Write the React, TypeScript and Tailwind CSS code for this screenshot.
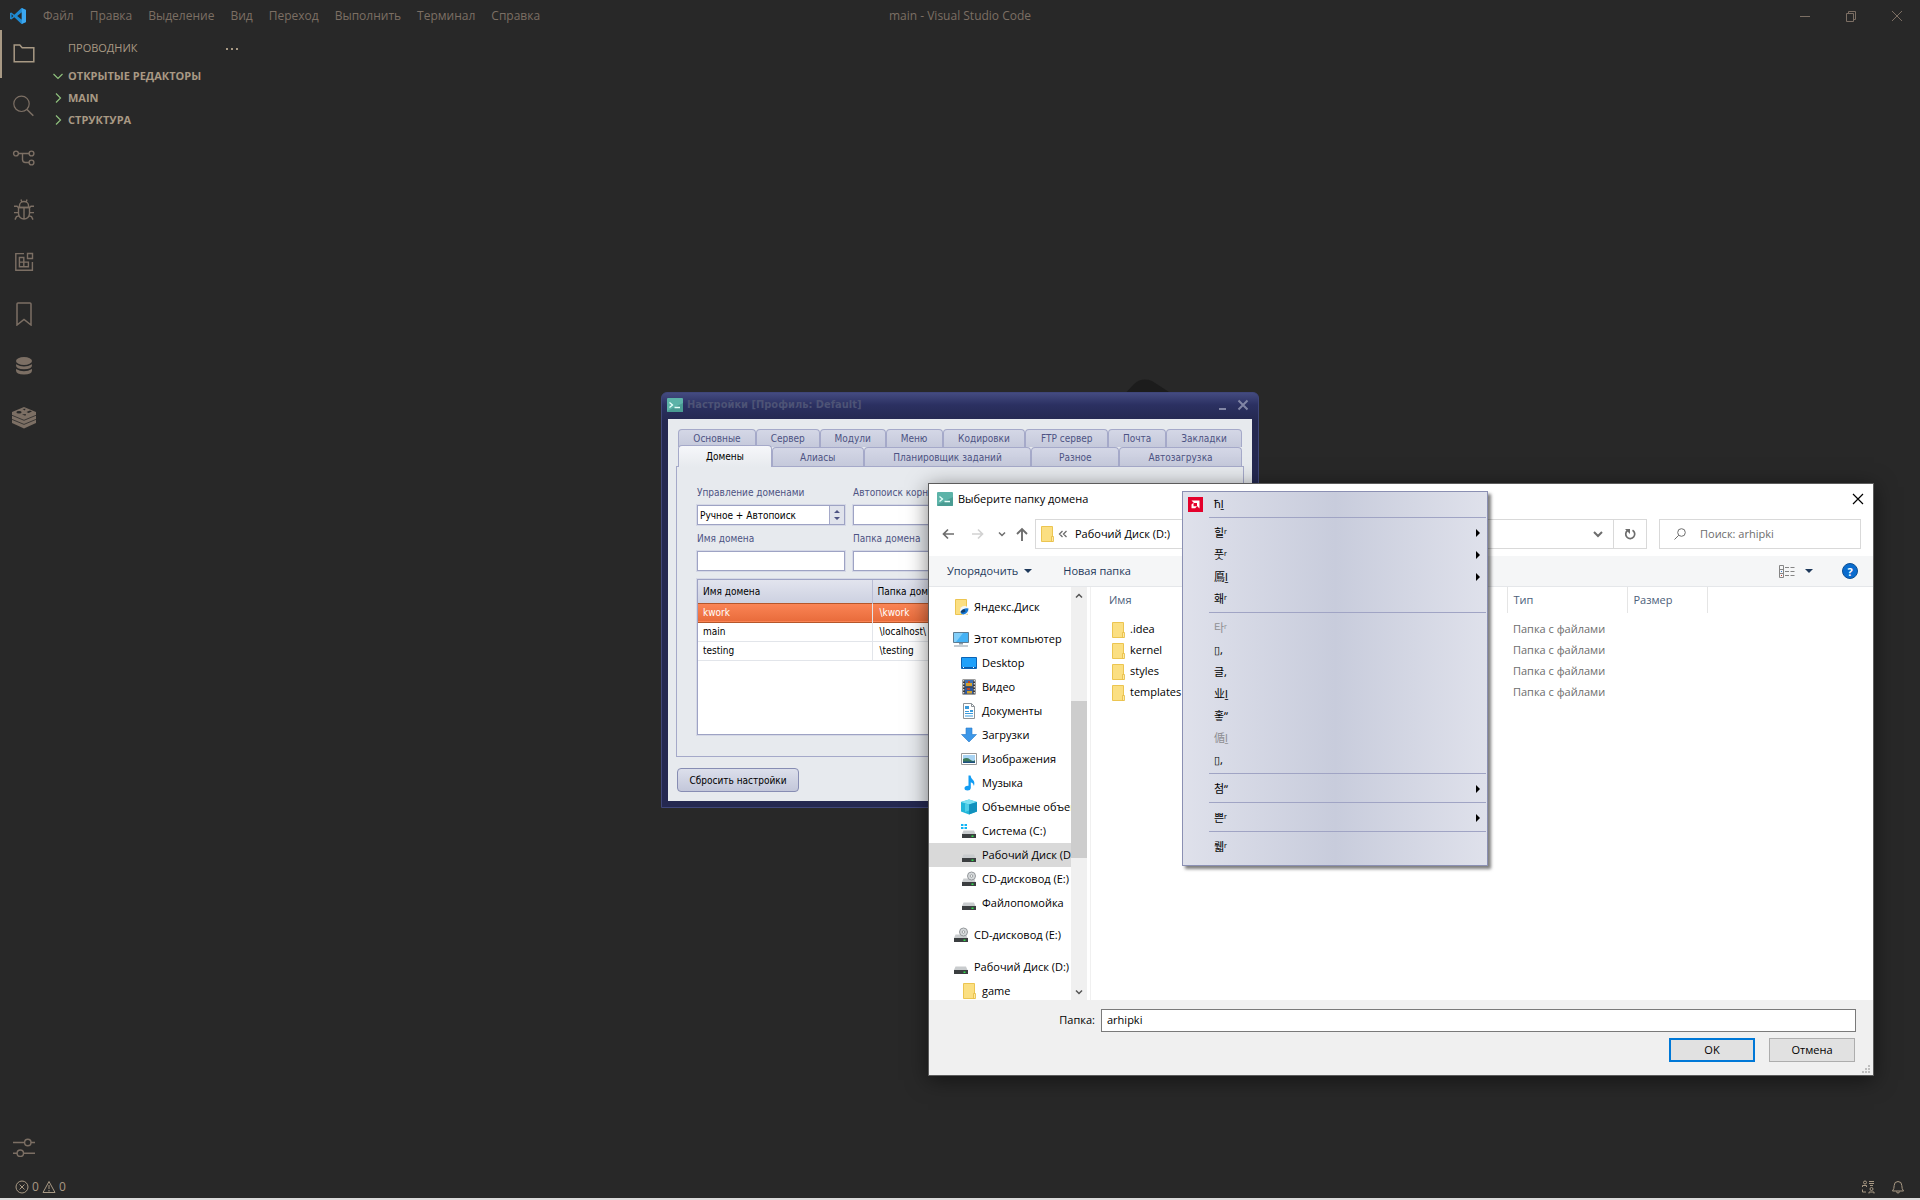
import React from "react";

type IconProps = { children: React.ReactNode; box?: string; className?: string };

function Line({ children, box = "0 0 24 24", className = "size-6" }: IconProps) {
  return (
    <svg viewBox={box} className={className} fill="none" stroke="currentColor" aria-hidden="true">
      {children}
    </svg>
  );
}

const activities = [
  {
    label: "Проводник",
    active: true,
    icon: (
      <Line>
        <path strokeWidth="1.5" d="M2.2 19.8V3h5.6l2.4 2.8h11.6v14z" />
      </Line>
    ),
  },
  {
    label: "Поиск",
    icon: (
      <Line>
        <circle strokeWidth="1.2" cx="9.5" cy="9.8" r="7.7" />
        <path strokeWidth="1.6" d="M15 15.5l6.3 6.3" />
      </Line>
    ),
  },
  {
    label: "Система управления версиями",
    icon: (
      <Line>
        <g strokeWidth="1.4">
          <circle cx="4" cy="7.5" r="2.4" />
          <circle cx="19.500" cy="7.500" r="2.400" />
          <circle cx="19.500" cy="16.500" r="2.400" />
          <path d="M6.400 7.500h10.700M10.500 7.500v6q0 3 3 3h3.600" />
        </g>
      </Line>
    ),
  },
  {
    label: "Запуск и отладка",
    icon: (
      <Line>
        <g strokeWidth="1.4">
          <path d="M6.5 9.5h11v6a5.500 5.500 0 0 1-11 0zM7.500 9V7.500a4.500 4 0 0 1 9 0V9M12 9.500V21" />
          <path d="M9.800 4L9 1.500M14.200 4l.8-2.500M2 8.200h3l1.500 1.300h11L19 8.200h3M2 14.600h4.500M22 14.600h-4.500M3 21.600l1.500-3 2.500-.8M21 21.600l-1.500-3-2.500-.8" />
        </g>
      </Line>
    ),
  },
  {
    label: "Расширения",
    icon: (
      <Line>
        <g strokeWidth="1.400">
          <path d="M12 3.600H3.800v16.600h16.600V12" />
          <path d="M15.500 3.500h5v5h-5zM7.400 7.500h4.400v4.600H7.400zM7.400 12.100h4.400v4.600H7.400zM11.800 12.100h4.600v4.600h-4.600z" />
        </g>
      </Line>
    ),
  },
  {
    label: "Закладки",
    icon: (
      <Line>
        <path strokeWidth="1.500" d="M5 23V2q0-1 1-1h12q1 0 1 1v21l-7-5.500z" />
      </Line>
    ),
  },
  {
    label: "Базы данных",
    icon: (
      <svg viewBox="0 0 24 24" className="size-6" fill="currentColor" aria-hidden="true">
        <ellipse cx="12" cy="7" rx="8" ry="4" />
        <path d="M4 10.200q8 4.600 16 0v1q0 4-8 4t-8-4zM4 15q8 4.600 16 0v1.600q0 4-8 4t-8-4z" />
      </svg>
    ),
  },
  {
    label: "Redis",
    icon: (
      <svg viewBox="0 0 24 24" className="size-6" fill="currentColor" aria-hidden="true">
        <path d="M12 1L24 6v11l-12 5.500L0 17V6z" />
        <g fill="none" stroke="#282828" strokeWidth=".8">
          <path d="M0 9.300l12 5 12-5M0 13.400l12 5 12-5" />
        </g>
        <g fill="#282828">
          <ellipse cx="7" cy="6.200" rx="2.600" ry="1.200" />
          <path d="M10.500 3l3-.2-.6 1.600zM14.500 6l3.500-1.400 2 .9-3.500 1.600zM10 8.500l4-.6-.6 1.900z" />
        </g>
      </svg>
    ),
  },
];

const sections = [
  { label: "ОТКРЫТЫЕ РЕДАКТОРЫ", open: true },
  { label: "MAIN", open: false },
  { label: "СТРУКТУРА", open: false },
];

function TitleBar() {
  const menus = ["Файл", "Правка", "Выделение", "Вид", "Переход", "Выполнить", "Терминал", "Справка"];
  return (
    <header className="grid h-[30px] grid-cols-[1fr_auto_1fr] items-center pt-px text-xs text-[#7c6f64]">
      <div className="flex h-full items-center">
        <svg viewBox="0 0 16 16" className="mr-[9px] ml-[10px] size-4" aria-hidden="true">
          <path d="M11.500 0L16 2v12l-4.500 2L4.300 9.300 1.300 11.600 0 11V5l1.300-.6 3 2.300z" fill="#1f8ad2" />
          <path d="M1.600 6.300L3.300 8 1.600 9.700zM11.800 4.300L7.200 8l4.600 3.700z" fill="#282828" />
          <path d="M11.800 0L16 2v12l-4.200 2z" fill="#3ba7f0" />
        </svg>
        <nav className="flex">
          {menus.map((m) => (
            <button key={m} className="px-2">
              {m}
            </button>
          ))}
        </nav>
      </div>
      <h1>main - Visual Studio Code</h1>
      <div className="flex h-full justify-end">
        <button aria-label="Свернуть" className="grid w-[46px] place-items-center">
          <Line box="0 0 12 12" className="size-3"><path d="M1 6.500h10" /></Line>
        </button>
        <button aria-label="Восстановить" className="grid w-[46px] place-items-center">
          <Line box="0 0 12 12" className="size-3"><path d="M1.500 3.500h7v8h-7zM3.500 3.500v-2h7v8h-2" /></Line>
        </button>
        <button aria-label="Закрыть" className="grid w-[46px] place-items-center">
          <Line box="0 0 12 12" className="size-3"><path d="M1 1l10 10M11 1L1 11" /></Line>
        </button>
      </div>
    </header>
  );
}

function ActivityBar() {
  return (
    <nav className="flex w-12 flex-col gap-1 pb-1 text-[#7c6f64]">
      {activities.map((a) => (
        <button
          key={a.label}
          aria-label={a.label}
          className={
            a.active
              ? "grid h-12 place-items-center border-l-2 border-[#a89984] pr-0.5 text-[#a89984]"
              : "grid h-12 place-items-center"
          }
        >
          {a.icon}
        </button>
      ))}
      <button aria-label="Управление" className="mt-auto grid h-12 place-items-center">
        <Line>
          <g strokeWidth="1.400">
            <circle cx="15.800" cy="6.500" r="3.200" />
            <circle cx="8.300" cy="17.200" r="3.200" />
            <path d="M1 6.500h11.600M19 6.500h4M1 17.200h4.100M11.500 17.200H23" />
          </g>
        </Line>
      </button>
    </nav>
  );
}

function Sidebar() {
  return (
    <aside className="w-[200px] text-[11px] text-[#a89984]">
      <div className="flex h-[35px] items-center justify-between pt-0.5 pr-1.5 pl-5">
        <h2>ПРОВОДНИК</h2>
        <button aria-label="Дополнительные действия" className="pr-[3px]">
          <Line box="0 0 14 4" className="h-1 w-3.5"><path strokeWidth="2" strokeDasharray="2 3" d="M1 2h12" /></Line>
        </button>
      </div>
      {sections.map((s) => (
        <button key={s.label} className="flex h-[22px] w-full items-center gap-[5px] pl-[5px] font-bold">
          <Line box="0 0 10 10" className="size-2.5 text-[#8ec07c]">
            <path strokeWidth="1.200" d={s.open ? "M.5 3L5 7.500 9.500 3" : "M3 .5L7.500 5 3 9.500"} />
          </Line>
          {s.label}
        </button>
      ))}
    </aside>
  );
}

function StatusBar() {
  return (
    <footer className="flex h-[22px] items-center justify-between px-[15px] text-xs text-[#a89984]">
      <button className="flex items-center gap-[3px]">
        <Line box="0 0 14 14" className="size-3.5">
          <circle cx="7" cy="7" r="6" />
          <path d="M4.500 4.500l5 5M9.500 4.500l-5 5" />
        </Line>
        0
        <Line box="0 0 14 14" className="size-3.5">
          <path d="M7 1.500L13 12.500H1zM7 5v4M7 10v1.500" />
        </Line>
        0
      </button>
      <div className="flex gap-4">
        <button aria-label="Отзывы">
          <Line box="0 0 14 14" className="size-3.5">
            <circle cx="4" cy="2.500" r="1.500" />
            <path d="M1.500 7V5.500h4V7M8 1.500h5M8 3.500h5M9 5.500h3M1.500 9.500v2.500H5" />
            <circle cx="10.500" cy="9" r="1.500" />
            <path d="M8 13.500V12h5v1.500" />
          </Line>
        </button>
        <button aria-label="Уведомления">
          <Line box="0 0 14 14" className="size-3.5">
            <path d="M7 1.500q3.800 0 3.800 4 0 3.500 1.700 5.500h-11q1.700-2 1.700-5.500 0-4 3.800-4zM5.500 11.500a1.500 1.500 0 0 0 3 0" />
          </Line>
        </button>
      </div>
    </footer>
  );
}

function ConsoleIcon() {
  return (
    <svg viewBox="0 0 16 14" className="h-3.5 w-4 shrink-0" aria-hidden="true">
      <rect width="16" height="14" rx="1" fill="#5cb3a8" />
      <path d="M0 13L16 5v8q0 1-1 1H1z" fill="#4a9c93" />
      <path d="M2.500 4.500L5.500 7l-3 2.500M7.500 9.500H13" fill="none" stroke="#e6fffa" strokeWidth="1.300" />
    </svg>
  );
}

const tabsTop = ["Основные", "Сервер", "Модули", "Меню", "Кодировки", "FTP сервер", "Почта", "Закладки"];
const tabsBottom = ["Домены", "Алиасы", "Планировщик заданий", "Разное", "Автозагрузка"];
const domains = [
  ["kwork", "\\kwork"],
  ["main", "\\localhost\\"],
  ["testing", "\\testing"],
];

const inputStyle = "h-5 w-full border border-[#9ea3c4] bg-white outline outline-[#d5d8e6]";

function SettingsWindow() {
  return (
    <section
      aria-label="Настройки"
      className="absolute top-[392px] left-[661px] flex h-[416px] w-[598px] flex-col rounded-t-md border border-[#3f4679] bg-[#262b55] bg-linear-to-b from-[#444b80] from-0% via-[#2b3061] via-[12px] to-[#242850] to-[28px] pr-1.5 pb-1.5 pl-[5px] font-['DejaVu_Sans_Condensed','DejaVu_Sans',sans-serif] text-[10px] text-[#4d5383]"
    >
      <header className="flex h-[26px] items-center gap-1 pr-[3px] pb-0.5 text-[#4d5376]">
        <ConsoleIcon />
        <h2 className="text-[11px] font-bold">Настройки [Профиль: Default]</h2>
        <div className="ml-auto flex items-center gap-2.5 text-[#8185a5]">
          <button aria-label="Свернуть">
            <Line box="0 0 8 12" className="h-3 w-2"><path strokeWidth="2" d="M0 10h7" /></Line>
          </button>
          <button aria-label="Закрыть">
            <Line box="0 0 12 12" className="size-3"><path strokeWidth="2" d="M1.500 1.500l9 9M10.500 1.500l-9 9" /></Line>
          </button>
        </div>
      </header>
      <div className="ml-px flex flex-1 flex-col bg-[#e7eaee] px-2 pt-2.5 pb-[9px]">
        <div role="tablist" className="px-0.5">
          <div className="grid grid-cols-[78fr_64fr_66fr_57fr_83fr_83fr_58fr_76fr]">
            {tabsTop.map((t) => (
              <button key={t} role="tab" className="h-[18px] rounded-t border border-b-0 border-[#a5a9c9] bg-linear-to-b from-[#d4d7e6] to-[#c5c9db]">
                {t}
              </button>
            ))}
          </div>
          <div className="grid h-[19px] grid-cols-[94fr_92fr_168fr_88fr_123fr] grid-rows-[19px] items-end">
            {tabsBottom.map((t, i) =>
              i === 0 ? (
                <button key={t} role="tab" aria-selected="true" className="relative z-10 -mb-px h-[22px] rounded-t border border-b-0 border-[#a5a9c9] bg-linear-to-b from-[#f6f7fa] to-[#e7eaee] text-black">
                  {t}
                </button>
              ) : (
                <button key={t} role="tab" className="h-[19px] rounded-t border border-b-0 border-[#a5a9c9] bg-linear-to-b from-[#d4d7e6] to-[#c5c9db]">
                  {t}
                </button>
              ),
            )}
          </div>
        </div>
        <div className="flex flex-1 flex-col border border-[#a5a9c9] px-5 pt-[19px] pb-[21px]">
          <div className="grid grid-cols-[148px_1fr] gap-x-2">
            <label htmlFor="mode" className="leading-[14px]">Управление доменами</label>
            <label htmlFor="auto" className="leading-[14px] whitespace-nowrap">Автопоиск корня</label>
            <div className="relative mt-[5px]">
              <select id="mode" defaultValue="1" className={`${inputStyle} appearance-none pl-0.5 text-black`}>
                <option value="1">Ручное + Автопоиск</option>
              </select>
              <span className="pointer-events-none absolute inset-y-px right-px grid w-[15px] place-items-center border-l border-[#a5a9c9] bg-[#e0e3ec] text-[#4d5383]">
                <svg viewBox="0 0 8 12" className="h-3 w-2" fill="currentColor" aria-hidden="true">
                  <path d="M4 1l3 3H1zM4 11l3-3H1z" />
                </svg>
              </span>
            </div>
            <input id="auto" className={`${inputStyle} mt-[5px]`} />
            <label htmlFor="name" className="mt-[7px] leading-[14px]">Имя домена</label>
            <label htmlFor="dir" className="mt-[7px] leading-[14px]">Папка домена</label>
            <input id="name" className={`${inputStyle} mt-[5px]`} />
            <input id="dir" className={`${inputStyle} mt-[5px]`} />
          </div>
          <div className="mt-2 flex-1 border border-[#9ea3c4] bg-white outline outline-[#d5d8e6]">
            <table className="w-full table-fixed text-left text-black">
              <colgroup>
                <col className="w-[174px]" />
                <col />
              </colgroup>
              <thead>
                <tr className="h-[23px] bg-linear-to-b from-[#e2e4ee] to-[#cdd1e1]">
                  <th className="border-r border-[#b9bdd4] pl-[5px] font-normal">Имя домена</th>
                  <th className="pl-[5px] font-normal">Папка домена</th>
                </tr>
              </thead>
              <tbody>
                {domains.map(([name, dir], i) => (
                  <tr
                    key={name}
                    className={
                      i === 0
                        ? "h-[19px] border-y border-[#b5562a] bg-linear-to-b from-[#fa8455] to-[#e96c3c] text-white"
                        : "h-[19px] border-b border-[#e2e5ea]"
                    }
                  >
                    <td className="border-r border-[#e2e5ea] pl-[5px]">{name}</td>
                    <td className="pl-[7px]">{dir}</td>
                  </tr>
                ))}
              </tbody>
            </table>
          </div>
        </div>
        <button className="mt-[11px] ml-px h-6 w-[122px] self-start rounded border border-[#878db3] bg-linear-to-b from-[#dcdfeb] to-[#c3c7da] text-black">
          Сбросить настройки
        </button>
      </div>
    </section>
  );
}

type Kind =
  | "folder" | "yandex" | "pc" | "desktop" | "video" | "docs" | "down"
  | "image" | "music" | "cube" | "system" | "drive" | "cd";

function Drive() {
  return (
    <>
      <path d="M2.500 7.500h10.500l1.500 3.500H1z" fill="#c9ccce" />
      <path d="M1 11h14v4H1z" fill="#3b3e40" />
      <path d="M10.500 12.500h2v1.500h-2z" fill="#2fe04a" />
    </>
  );
}

function FileIcon({ kind }: { kind: Kind }) {
  return (
    <svg viewBox="0 0 16 16" className="size-4 shrink-0" aria-hidden="true">
      {(kind === "folder" || kind === "yandex") && (
        <>
          <path d="M2.500.5h11v15h-11z" fill="#fbdf82" stroke="#ecc551" />
          <path d="M12.500 10.500h2v5h-2z" fill="#ffe9a2" stroke="#e6bb40" strokeWidth=".8" />
        </>
      )}
      {kind === "yandex" && (
        <>
          <circle cx="11.500" cy="11.500" r="4.500" fill="#f3f6fa" />
          <path d="M7.500 13q3-4.500 8-3.500-.5 5-5 6-2.500 0-3-2.500z" fill="#1377d4" />
          <path d="M7.500 13q1.500-3 4-3l1 2.500q-2.500 2-5 .5z" fill="#123e6b" />
        </>
      )}
      {kind === "pc" && (
        <>
          <path d="M.5 1.500h15v10H.5z" fill="#45b2f5" stroke="#5d7c92" />
          <path d="M1 2h9L3 11H1z" fill="#82cffa" />
          <path d="M6 12h4v1.500H6zM1 14.500h14v1H1z" fill="#8b9aa6" />
        </>
      )}
      {kind === "desktop" && (
        <>
          <path d="M.5 2.500h15v11H.5z" fill="#1ea0fa" stroke="#0b63b5" />
          <path d="M1 12h14v1H1z" fill="#0b5aa8" />
          <path d="M2 12h1v1H2zM12 12h1v1h-1z" fill="#fff" />
        </>
      )}
      {kind === "video" && (
        <>
          <path d="M1.500.5h13v15h-13z" fill="#3a3a3a" />
          <path d="M4 1h8v6.500H4z" fill="#3f6fb0" />
          <path d="M4 8.500h8V15H4z" fill="#2e589c" />
          <path d="M5 4h6v3H5zM6 12h5v2.500H6z" fill="#d4a02c" />
          <path d="M7 2h2v2H7zM6 9h3v2H6z" fill="#b8442a" />
          <path d="M2.700 1v15M13.300 1v15" stroke="#e8e8e8" strokeWidth="1.200" strokeDasharray="1.500 1.500" />
        </>
      )}
      {kind === "docs" && (
        <>
          <path d="M2.500.5h8l3 3v12h-11z" fill="#fff" stroke="#8d9499" />
          <path d="M10.500.5v3h3" fill="none" stroke="#8d9499" />
          <path d="M4 3h4v3H4zM4 8h4v1H4zM4 10h8v1H4zM9 7h3v2H9zM4 12.500h8v1H4z" fill="#3a9bdc" />
        </>
      )}
      {kind === "down" && <path d="M5 1h6v6.500h4.500L8 15 .5 7.500H5z" fill="#3c97e8" stroke="#2679c9" strokeWidth=".6" />}
      {kind === "image" && (
        <>
          <path d="M.5 2.500h15v11H.5z" fill="#fff" stroke="#999" />
          <path d="M2 4h12v8H2z" fill="#a9d4f3" />
          <path d="M2 8q4-2 7 .5t5 .5v3H2z" fill="#3d7b5c" />
          <path d="M2 10.500h12V12H2z" fill="#1d4f80" />
        </>
      )}
      {kind === "music" && (
        <path d="M7.500.5h2q.5 3 2.500 4.500t1 6q-.5-3-3.200-3.800v5.800q-.3 2.500-3.300 2.500-3 0-3-2.200 0-2.800 4-2.600z" fill="#119cf3" />
      )}
      {kind === "cube" && (
        <>
          <path d="M0 3l8-2.500L16 3v9.500l-8 3-8-3z" fill="#21b6d9" />
          <path d="M0 3l8-2.500L16 3 8 5.500z" fill="#7be1f2" />
          <path d="M8 5.500L16 3v9.500l-8 3z" fill="#1191bd" />
          <path d="M4 4.500l4 1v6l-4 1.500z" fill="#4fcfe8" />
        </>
      )}
      {(kind === "drive" || kind === "system" || kind === "cd") && <Drive />}
      {kind === "system" && (
        <path d="M0 1h2.500v2H0zM3.500 1H6v2H3.500zM0 4h2.500v2H0zM3.500 4H6v2H3.500z" fill="#12b5f5" />
      )}
      {kind === "cd" && (
        <>
          <circle cx="10.500" cy="5" r="4" fill="#d6d9db" stroke="#95999c" />
          <circle cx="10.500" cy="5" r="1.300" fill="#fff" stroke="#8c9092" strokeWidth=".8" />
        </>
      )}
    </svg>
  );
}

const tree: { label: string; kind: Kind; child?: boolean; selected?: boolean }[] = [
  { label: "Яндекс.Диск", kind: "yandex" },
  { label: "Этот компьютер", kind: "pc" },
  { label: "Desktop", kind: "desktop", child: true },
  { label: "Видео", kind: "video", child: true },
  { label: "Документы", kind: "docs", child: true },
  { label: "Загрузки", kind: "down", child: true },
  { label: "Изображения", kind: "image", child: true },
  { label: "Музыка", kind: "music", child: true },
  { label: "Объемные объекты", kind: "cube", child: true },
  { label: "Система (C:)", kind: "system", child: true },
  { label: "Рабочий Диск (D:)", kind: "drive", child: true, selected: true },
  { label: "CD-дисковод (E:)", kind: "cd", child: true },
  { label: "Файлопомойка", kind: "drive", child: true },
  { label: "CD-дисковод (E:)", kind: "cd" },
  { label: "Рабочий Диск (D:)", kind: "drive" },
  { label: "game", kind: "folder", child: true },
];

function Chevron({ up = false, className = "h-2 w-2.5" }: { up?: boolean; className?: string }) {
  return (
    <Line box="0 0 10 8" className={className}>
      <path strokeWidth="2" d={up ? "M1 6l4-4 4 4" : "M1 2l4 4 4-4"} />
    </Line>
  );
}

function Caret() {
  return (
    <svg viewBox="0 0 8 4" className="h-1 w-2" fill="#1e395b" aria-hidden="true">
      <path d="M0 0h8L4 4z" />
    </svg>
  );
}

function FolderDialog() {
  return (
    <section
      aria-label="Выберите папку домена"
      className="absolute top-[483px] left-[928px] flex h-[593px] w-[946px] flex-col border border-[#5c5c5c] bg-white text-[11px] text-black shadow-[0_4px_20px_rgba(0,0,0,0.5)]"
    >
      <header className="flex h-[30px] items-center gap-[5px] pr-[9px] pl-2">
        <ConsoleIcon />
        <h2>Выберите папку домена</h2>
        <button aria-label="Закрыть" className="ml-auto">
          <Line box="0 0 12 12" className="size-3"><path strokeWidth="1.200" d="M1 1l10 10M11 1L1 11" /></Line>
        </button>
      </header>
      <div className="flex h-[42px] items-center pr-3 pb-0.5 pl-[13px] text-[#6d6d6d]">
        <button aria-label="Назад">
          <Line box="0 0 12 12" className="size-3"><path strokeWidth="1.700" d="M12 6H1.500M6 1.500L1.500 6 6 10.500" /></Line>
        </button>
        <button aria-label="Вперед" className="ml-[18px] text-[#d2d2d2]">
          <Line box="0 0 12 12" className="size-3"><path strokeWidth="1.700" d="M0 6h10.500M6 1.500L10.500 6 6 10.500" /></Line>
        </button>
        <button aria-label="Последние расположения" className="ml-3.5"><Chevron className="h-1.5 w-2" /></button>
        <button aria-label="Вверх" className="ml-[10px]">
          <Line box="0 0 12 14" className="h-3.5 w-3"><path strokeWidth="1.900" d="M6 14V2M1 7l5-5 5 5" /></Line>
        </button>
        <div className="ml-[7px] flex h-[30px] flex-1 items-center border border-[#d9d9d9] pl-[3px]">
          <FileIcon kind="folder" />
          <span className="ml-[3px]">
            <Line box="0 0 10 8" className="h-2 w-2.5"><path strokeWidth="1.300" d="M4.500 1l-3 3 3 3M8.500 1l-3 3 3 3" /></Line>
          </span>
          <span className="ml-[7px] text-black">Рабочий Диск (D:)</span>
          <button aria-label="Предыдущие расположения" className="mr-2.5 ml-auto"><Chevron className="h-2 w-2.5" /></button>
          <button aria-label="Обновить" className="grid h-full w-[33px] place-items-center border-l border-[#d9d9d9]">
            <Line box="0 0 12 12" className="size-3">
              <path strokeWidth="1.700" d="M8.500 2.200A4.500 4.500 0 1 1 3.500 2.500" />
              <path fill="currentColor" stroke="none" d="M1 1h5v5z" />
            </Line>
          </button>
        </div>
        <label className="ml-3 flex h-[30px] w-[202px] items-center gap-3.5 border border-[#d9d9d9] pl-3.5">
          <Line box="0 0 12 12" className="size-3 shrink-0">
            <circle cx="7.500" cy="4.500" r="3.800" />
            <path d="M4.700 7.300L.5 11.500" />
          </Line>
          <input aria-label="Поиск" placeholder="Поиск: arhipki" className="w-full outline-none placeholder:text-[#6d6d6d]" />
        </label>
      </div>
      <div className="flex h-[31px] items-center border-b border-[#e5e7ea] bg-[#f5f6f7] pr-[15px] pl-[18px] text-[#1e395b]">
        <button className="flex items-center gap-1.5">Упорядочить <Caret /></button>
        <button className="ml-[31px]">Новая папка</button>
        <button aria-label="Изменить представление" className="ml-auto flex items-center gap-[10px]">
          <Line box="0 0 16 13" className="h-[13px] w-4 text-[#858585]">
            <path d="M.5.5h4v12h-4zM.5 4.500h4M.5 8.500h4M6 2.500h4M11.500 2.500h4M6 6.500h4M11.500 6.500h4M6 10.500h4M11.500 10.500h4" />
            <path stroke="#c0392b" d="M2 10.500h1" />
            <path stroke="#3b78c4" d="M2 6.500h1" />
          </Line>
          <Caret />
        </button>
        <button aria-label="Справка" className="ml-[29px] grid size-4 place-items-center rounded-full border border-[#0b4f94] bg-[#0a6cce] text-[11px] leading-none font-bold text-white">
          ?
        </button>
      </div>
      <div className="flex min-h-0 flex-1">
        <nav className="w-[142px] overflow-hidden pt-2">
          <ul>
            {tree.map((n, i) => (
              <li key={i} className={n.child || i === 0 ? "" : "mt-2"}>
                <button
                  className={`flex h-6 w-full items-center gap-[5px] whitespace-nowrap ${n.child ? "pl-8" : "pl-6"} ${n.selected ? "bg-[#d9d9d9]" : ""}`}
                >
                  <FileIcon kind={n.kind} />
                  {n.label}
                </button>
              </li>
            ))}
          </ul>
        </nav>
        <div className="flex w-4 flex-col items-center bg-[#f0f0f0] text-[#555]">
          <span className="grid h-[17px] place-items-center"><Chevron up className="h-1.5 w-2" /></span>
          <div className="mt-[97px] h-[157px] w-full bg-[#cdcdcd]" />
          <span className="mt-auto grid h-[17px] place-items-center"><Chevron className="h-1.5 w-2" /></span>
        </div>
        <div className="ml-[3px] flex-1 border-l border-[#f0f0f0] pl-[18px]">
          <table className="w-full table-fixed text-left text-[#6d6d6d]">
            <colgroup>
              <col className="w-[260px]" />
              <col className="w-[138px]" />
              <col className="w-[120px]" />
              <col className="w-20" />
              <col />
            </colgroup>
            <thead>
              <tr className="h-[26px] text-[#4c607a]">
                <th className="font-normal">Имя</th>
                <th className="border-r border-[#e5e5e5]" aria-label="Дата изменения" />
                <th className="border-r border-[#e5e5e5] pl-1.5 font-normal">Тип</th>
                <th className="border-r border-[#e5e5e5] pl-1.5 font-normal">Размер</th>
                <th aria-hidden="true" />
              </tr>
            </thead>
            <tbody>
              <tr className="h-1.5" aria-hidden="true" />
              {[".idea", "kernel", "styles", "templates"].map((f) => (
                <tr key={f} className="h-[21px]">
                  <td className="pl-px text-black">
                    <span className="flex items-center gap-1">
                      <FileIcon kind="folder" />
                      {f}
                    </span>
                  </td>
                  <td />
                  <td className="pl-1.5">Папка с файлами</td>
                  <td />
                  <td />
                </tr>
              ))}
            </tbody>
          </table>
        </div>
      </div>
      <footer className="relative bg-[#f0f0f0] pt-[9px] pr-[17px] pb-[13px]">
        <div className="flex items-center">
          <label htmlFor="folder" className="w-[172px] pr-1.5 text-right">Папка:</label>
          <input id="folder" defaultValue="arhipki" className="h-[23px] flex-1 border border-[#7a7a7a] bg-white px-[5px] pb-0.5" />
        </div>
        <div className="mt-1.5 flex justify-end gap-3.5 pr-px">
          <button className="h-6 w-[86px] border-2 border-[#0078d7] bg-[#e1e1e1]">OK</button>
          <button className="h-6 w-[86px] border border-[#adadad] bg-[#e1e1e1]">Отмена</button>
        </div>
        <svg viewBox="0 0 8 8" className="absolute right-[3px] bottom-0.5 size-2" fill="#bfbfbf" aria-hidden="true">
          <path d="M6 0h2v2H6zM3 3h2v2H3zM6 3h2v2H6zM0 6h2v2H0zM3 6h2v2H3zM6 6h2v2H6z" />
        </svg>
      </footer>
    </section>
  );
}

type Entry = { text: string; more?: boolean; dim?: boolean; logo?: boolean };

const menuGroups: Entry[][] = [
  [{ text: "ћḻ", logo: true }],
  [{ text: "힐ʳ", more: true }, { text: "풋ʳ", more: true }, { text: "鳫ḻ", more: true }, { text: "홰ʳ" }],
  [
    { text: "타ʳ", dim: true },
    { text: "▯," },
    { text: "글," },
    { text: "业ḻ" },
    { text: "홓ˮ" },
    { text: "偱ḻ", dim: true },
    { text: "▯," },
  ],
  [{ text: "첨ˮ", more: true }],
  [{ text: "쁜ʳ", more: true }],
  [{ text: "뤫ʳ" }],
];

function ContextMenu() {
  return (
    <div
      role="menu"
      className="absolute top-[491px] left-[1182px] w-[306px] border border-[#8b90b3] bg-linear-to-r from-[#dfe1eb] via-[#c8ccdc] to-[#dfe1eb] pt-px pb-1.5 font-['Noto_Sans','Noto_Sans_CJK_KR',sans-serif] text-[11px] leading-4 text-black shadow-[3px_3px_3px_rgba(0,0,0,0.5)]"
    >
      {menuGroups.map((group, g) => (
        <div key={g} className="last:pb-px">
          {g > 0 && <hr className="mt-0.5 mr-px mb-1 ml-[26px] border-[#a0a4c4]" />}
          {group.map((e, i) => (
            <button
              key={i}
              role="menuitem"
              className={`flex h-[22px] w-full items-center pr-[7px] ${e.dim ? "text-[#8e8e92]" : ""}`}
            >
              <span className="w-[31px] pl-[5px]">
                {e.logo && (
                  <svg viewBox="0 0 15 15" className="size-[15px]" aria-hidden="true">
                    <path d="M0 0h15v15H0z" fill="#e4002b" />
                    <path d="M3.500 3.500h8v8L9 9V6H6zM3.500 7.500L5.500 5.700V9.300H9l-1.800 2H3.500z" fill="#fff" />
                  </svg>
                )}
              </span>
              {e.text}
              {e.more && (
                <svg viewBox="0 0 4 8" className="ml-auto h-2 w-1" aria-hidden="true">
                  <path d="M0 0l4 4-4 4z" />
                </svg>
              )}
            </button>
          ))}
        </div>
      ))}
    </div>
  );
}

export default function App() {
  return (
    <div className="relative flex h-screen w-full flex-col overflow-hidden border-b-2 border-[#dcdcdc] bg-[#282828] font-['Open_Sans','Noto_Sans',sans-serif]">
      <TitleBar />
      <main className="flex min-h-0 flex-1">
        <ActivityBar />
        <Sidebar />
      </main>
      <StatusBar />
      <svg viewBox="0 0 60 20" className="absolute top-[379px] left-[1120px] h-5 w-[60px]" aria-hidden="true">
        <path d="M0 20L14 5q8-7 18-3l28 18z" fill="#1c1c1c" />
      </svg>
      <SettingsWindow />
      <FolderDialog />
      <ContextMenu />
    </div>
  );
}
